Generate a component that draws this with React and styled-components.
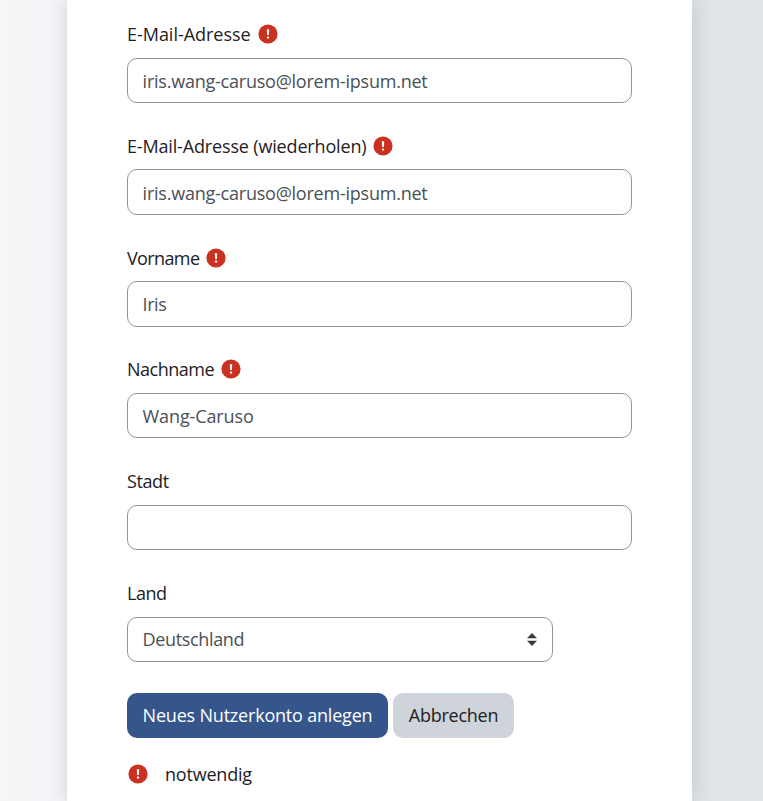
import React, { useState } from "react";
import styled, { createGlobalStyle } from "styled-components";

const fields = [
  { id: "email", label: "E-Mail-Adresse", required: true, track: "-0.03px", valueTrack: "-0.23px", drop: "2px" },
  { id: "email2", label: "E-Mail-Adresse (wiederholen)", required: true, track: "-0.16px", valueTrack: "-0.23px", drop: "2px" },
  { id: "firstname", label: "Vorname", required: true, track: "-0.62px", valueTrack: "-0.45px" },
  { id: "lastname", label: "Nachname", required: true, track: "-0.5px", valueTrack: "-0.12px" },
  { id: "city", label: "Stadt", required: false, track: "-0.4px", valueTrack: "-0.3px" },
];

function RequiredIcon() {
  return (
    <Icon viewBox="0 0 20 20" aria-hidden="true">
      <circle cx="10" cy="10" r="9.6" fill="#ca3120" />
      <path d="M8.8 5.2h2.4l-.3 5.9H9.1z" fill="#fff" />
      <rect x="8.9" y="12.4" width="2.2" height="2.2" rx="0.6" fill="#fff" />
    </Icon>
  );
}

function App() {
  const [user, setUser] = useState({
    email: "iris.wang-caruso@lorem-ipsum.net",
    email2: "iris.wang-caruso@lorem-ipsum.net",
    firstname: "Iris",
    lastname: "Wang-Caruso",
    city: "",
  });

  const handleChange = (prop) => (e) => {
    setUser({ ...user, [prop]: e.target.value });
  };

  return (
    <Page>
      <GlobalStyle />
      <Card>
        {fields.map((field) => (
          <Field key={field.id}>
            <Label htmlFor={field.id}>
              <Text $track={field.track}>{field.label}</Text>
              {field.required ? <RequiredIcon /> : ""}
            </Label>
            <Input
              id={field.id}
              value={user[field.id]}
              onChange={handleChange(field.id)}
              $track={field.valueTrack}
              $drop={field.drop}
            />
          </Field>
        ))}
        <Field>
          <Label htmlFor="country">
            <Text $track="-0.5px">Land</Text>
          </Label>
          <Select id="country" type="button">
            <Text $track="-0.35px">Deutschland</Text>
            <Arrows viewBox="0 0 10 13" aria-hidden="true">
              <path d="M5 0l5 5.2H0zM5 13l5-5.2H0z" fill="#343a40" />
            </Arrows>
          </Select>
        </Field>
        <Buttons>
          <Button $primary $width="261px" $track="-0.2px">
            Neues Nutzerkonto anlegen
          </Button>
          <Button $width="121px" $track="-0.25px">Abbrechen</Button>
        </Buttons>
        <Note>
          <RequiredIcon />
          <Text $track="-0.2px">notwendig</Text>
        </Note>
      </Card>
    </Page>
  );
}

const GlobalStyle = createGlobalStyle`
  * {
    box-sizing: border-box;
  }
  body {
    margin: 0;
    font-family: "Segoe UI", "Open Sans", "Noto Sans", sans-serif;
    font-size: 18px;
    color: #1d2125;
  }
  button, input {
    font: inherit;
  }
`;

const Page = styled.div`
  display: flex;
  height: 801px;
  padding-left: 67px;
  overflow: hidden;
  background: linear-gradient(to right, #f5f6f8, #e0e4e8 90%);
`;

const Card = styled.div`
  width: 625px;
  height: 801px;
  padding: 20px 60px 0;
  background: #fff;
  box-shadow: 0 0 19px rgba(0, 0, 0, 0.15);
`;

const Field = styled.div`
  height: 111.8px;
`;

const Label = styled.label`
  display: flex;
  align-items: center;
  gap: 7px;
  height: 28px;
  margin-bottom: 9.6px;
`;

const Text = styled.span`
  letter-spacing: ${(props) => props.$track};
  white-space: nowrap;
`;

const Icon = styled.svg`
  flex: none;
  width: 20px;
  height: 20px;
`;

const Input = styled.input`
  display: block;
  width: 505px;
  height: 45.4px;
  padding: ${(props) => props.$drop || 0} 14.6px 0;
  border: 1px solid #8f959e;
  border-radius: 10px;
  outline: none;
  background: #fff;
  color: #495057;
  letter-spacing: ${(props) => props.$track};
`;

const Select = styled.button`
  display: flex;
  align-items: center;
  justify-content: space-between;
  width: 426px;
  height: 45.4px;
  padding: 0 15px 0 14.6px;
  border: 1px solid #8f959e;
  border-radius: 10px;
  background: #fff;
  color: #495057;
`;

const Arrows = styled.svg`
  width: 10px;
  height: 13px;
`;

const Buttons = styled.div`
  display: flex;
  gap: 5px;
  margin-top: 2.2px;
`;

const Button = styled.button`
  width: ${(props) => props.$width};
  height: 45px;
  padding: 0;
  border: none;
  border-radius: 10px;
  background: ${(props) => (props.$primary ? "#35568b" : "#ced4da")};
  color: ${(props) => (props.$primary ? "#fff" : "#1d2125")};
  letter-spacing: ${(props) => props.$track};
  white-space: nowrap;
`;

const Note = styled.div`
  display: flex;
  align-items: center;
  gap: 17px;
  height: 28px;
  margin-top: 22px;
  padding-left: 1px;
`;

export default App;
